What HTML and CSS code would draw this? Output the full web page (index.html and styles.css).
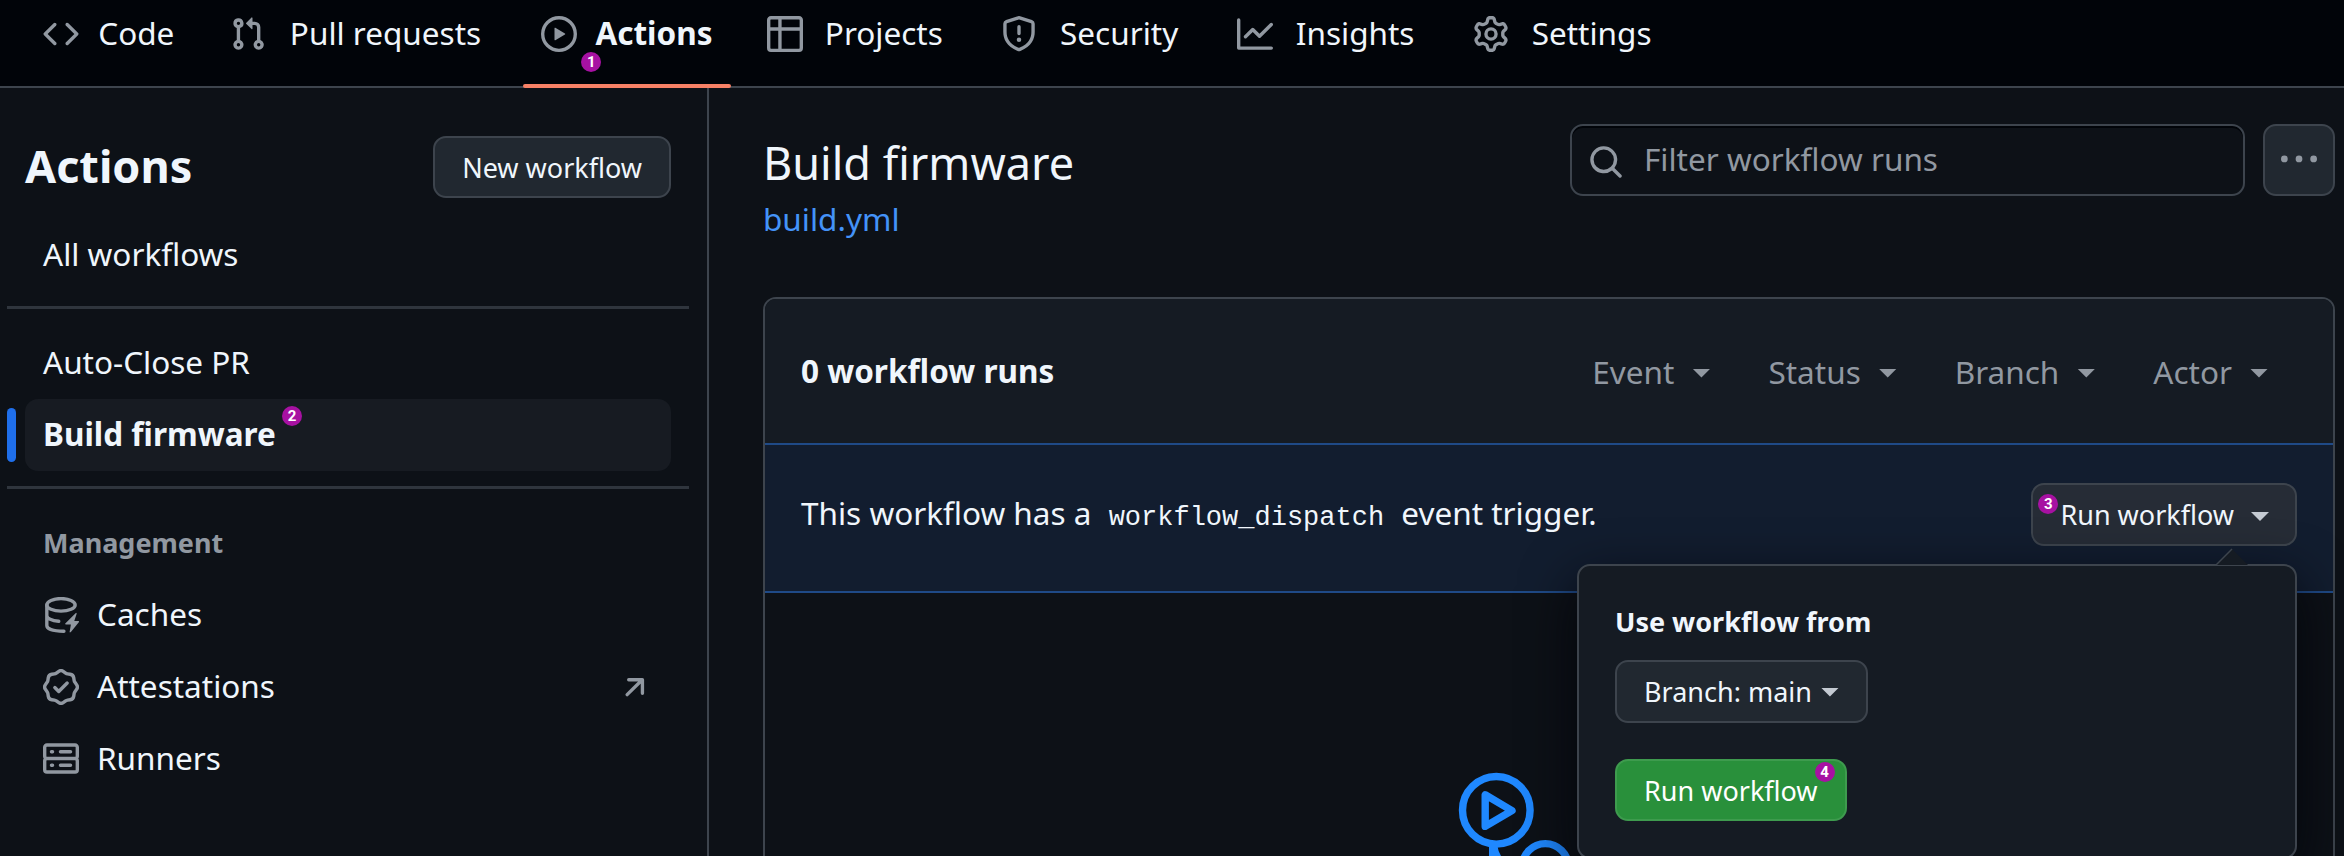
FILE: index.html
```html
<!DOCTYPE html>
<html lang="en">
<head>
<meta charset="utf-8">
<title>Actions</title>
<link rel="stylesheet" href="styles.css">
</head>
<body>
<nav class="nav">
  <a class="nav-item"><svg class="icon" viewBox="0 0 16 16"><path d="m11.28 3.22 4.25 4.25a.75.75 0 0 1 0 1.06l-4.25 4.25a.749.749 0 0 1-1.275-.326.749.749 0 0 1 .215-.734L13.94 8l-3.72-3.72a.749.749 0 0 1 .326-1.275.749.749 0 0 1 .734.215Zm-6.56 0a.751.751 0 0 1 1.042.018.751.751 0 0 1 .018 1.042L2.06 8l3.72 3.72a.749.749 0 0 1-.326 1.275.749.749 0 0 1-.734-.215L.47 8.53a.75.75 0 0 1 0-1.06Z"/></svg><span class="nav-label" data-label="Code">Code</span></a>
  <a class="nav-item"><svg class="icon" viewBox="0 0 16 16"><path d="M1.5 3.25a2.25 2.25 0 1 1 3 2.122v5.256a2.251 2.251 0 1 1-1.5 0V5.372A2.25 2.25 0 0 1 1.5 3.25Zm5.677-.177L9.573.677A.25.25 0 0 1 10 .854V2.5h1A2.5 2.5 0 0 1 13.5 5v5.628a2.251 2.251 0 1 1-1.5 0V5a1 1 0 0 0-1-1h-1v1.646a.25.25 0 0 1-.427.177L7.177 3.427a.25.25 0 0 1 0-.354ZM3.75 2.5a.75.75 0 1 0 0 1.5.75.75 0 0 0 0-1.5Zm0 9.5a.75.75 0 1 0 0 1.5.75.75 0 0 0 0-1.5Zm8.25.75a.75.75 0 1 0 1.5 0 .75.75 0 0 0-1.5 0Z"/></svg><span class="nav-label" data-label="Pull requests">Pull requests</span></a>
  <a class="nav-item nav-item-current"><svg class="icon" viewBox="0 0 16 16"><path d="M8 0a8 8 0 1 1 0 16A8 8 0 0 1 8 0ZM1.5 8a6.5 6.5 0 1 0 13 0 6.5 6.5 0 0 0-13 0Zm4.879-2.773 4.264 2.559a.25.25 0 0 1 0 .428l-4.264 2.559A.25.25 0 0 1 6 10.559V5.442a.25.25 0 0 1 .379-.215Z"/></svg><span class="nav-label" data-label="Actions">Actions</span><span class="step step-1">1</span></a>
  <a class="nav-item"><svg class="icon" viewBox="0 0 16 16"><path d="M0 1.75C0 .784.784 0 1.75 0h12.5C15.216 0 16 .784 16 1.75v12.5A1.75 1.75 0 0 1 14.25 16H1.75A1.75 1.75 0 0 1 0 14.25ZM6.5 6.5v8h7.75a.25.25 0 0 0 .25-.25V6.5Zm8-1.5V1.75a.25.25 0 0 0-.25-.25H6.5V5Zm-13 1.5v7.75c0 .138.112.25.25.25H5v-8ZM5 5V1.5H1.75a.25.25 0 0 0-.25.25V5Z"/></svg><span class="nav-label" data-label="Projects">Projects</span></a>
  <a class="nav-item"><svg class="icon" viewBox="0 0 16 16"><path d="M7.467.133a1.748 1.748 0 0 1 1.066 0l5.25 1.68A1.75 1.75 0 0 1 15 3.48V7c0 1.566-.32 3.182-1.303 4.682-.983 1.498-2.585 2.813-5.032 3.855a1.697 1.697 0 0 1-1.33 0c-2.447-1.042-4.049-2.357-5.032-3.855C1.32 10.182 1 8.566 1 7V3.48a1.75 1.75 0 0 1 1.217-1.667Zm.61 1.429a.25.25 0 0 0-.153 0l-5.25 1.68a.25.25 0 0 0-.174.238V7c0 1.358.275 2.666 1.057 3.86.784 1.194 2.121 2.34 4.366 3.297a.196.196 0 0 0 .154 0c2.245-.956 3.582-2.104 4.366-3.298C13.225 9.666 13.5 8.36 13.5 7V3.48a.251.251 0 0 0-.174-.237l-5.25-1.68ZM8.75 4.75v3a.75.75 0 0 1-1.5 0v-3a.75.75 0 0 1 1.5 0ZM9 10.5a1 1 0 1 1-2 0 1 1 0 0 1 2 0Z"/></svg><span class="nav-label" data-label="Security">Security</span></a>
  <a class="nav-item"><svg class="icon" viewBox="0 0 16 16"><path d="M1.5 1.75V13.5h13.75a.75.75 0 0 1 0 1.5H.75a.75.75 0 0 1-.75-.75V1.75a.75.75 0 0 1 1.5 0Zm14.28 2.53-5.25 5.25a.75.75 0 0 1-1.06 0L7 7.06 4.28 9.78a.751.751 0 0 1-1.042-.018.751.751 0 0 1-.018-1.042l3.25-3.25a.75.75 0 0 1 1.06 0L10 7.94l4.72-4.72a.751.751 0 0 1 1.042.018.751.751 0 0 1 .018 1.042Z"/></svg><span class="nav-label" data-label="Insights">Insights</span></a>
  <a class="nav-item"><svg class="icon" viewBox="0 0 16 16"><path d="M8 0a8.2 8.2 0 0 1 .701.031C9.444.095 9.99.645 10.16 1.29l.288 1.107c.018.066.079.158.212.224.231.114.454.243.668.386.123.082.233.09.299.071l1.103-.303c.644-.176 1.392.021 1.82.63.27.385.506.792.704 1.218.315.675.111 1.422-.364 1.891l-.814.806c-.049.048-.098.147-.088.294.016.257.016.515 0 .772-.01.147.038.246.088.294l.814.806c.475.469.679 1.216.364 1.891a7.977 7.977 0 0 1-.704 1.217c-.428.61-1.176.807-1.82.63l-1.102-.302c-.067-.019-.177-.011-.3.071a5.909 5.909 0 0 1-.668.386c-.133.066-.194.158-.211.224l-.29 1.106c-.168.646-.715 1.196-1.458 1.26a8.006 8.006 0 0 1-1.402 0c-.743-.064-1.289-.614-1.458-1.26l-.289-1.106c-.018-.066-.079-.158-.212-.224a5.738 5.738 0 0 1-.668-.386c-.123-.082-.233-.09-.299-.071l-1.103.303c-.644.176-1.392-.021-1.82-.63a8.12 8.12 0 0 1-.704-1.218c-.315-.675-.111-1.422.363-1.891l.815-.806c.05-.048.098-.147.088-.294a6.214 6.214 0 0 1 0-.772c.01-.147-.038-.246-.088-.294l-.815-.806C.635 6.045.431 5.298.746 4.623a7.92 7.92 0 0 1 .704-1.217c.428-.61 1.176-.807 1.82-.63l1.102.302c.067.019.177.011.3-.071.214-.143.437-.272.668-.386.133-.066.194-.158.211-.224l.29-1.106C6.009.645 6.556.095 7.299.03 7.53.01 7.764 0 8 0Zm-.571 1.525c-.036.003-.108.036-.137.146l-.289 1.105c-.147.561-.549.967-.998 1.189-.173.086-.34.183-.5.29-.417.278-.97.423-1.529.27l-1.103-.303c-.109-.03-.175.016-.195.045-.22.312-.412.644-.573.99-.014.031-.021.11.059.19l.815.806c.411.406.562.957.53 1.456a4.709 4.709 0 0 0 0 .582c.032.499-.119 1.05-.53 1.456l-.815.806c-.081.08-.073.159-.059.19.162.346.353.677.573.989.02.03.085.076.195.046l1.102-.303c.56-.153 1.113-.008 1.53.27.161.107.328.204.501.29.447.222.85.629.997 1.189l.289 1.105c.029.109.101.143.137.146a6.6 6.6 0 0 0 1.142 0c.036-.003.108-.036.137-.146l.289-1.105c.147-.561.549-.967.998-1.189.173-.086.34-.183.5-.29.417-.278.97-.423 1.529-.27l1.103.303c.109.029.175-.016.195-.045.22-.313.411-.644.573-.99.014-.031.021-.11-.059-.19l-.815-.806c-.411-.406-.562-.957-.53-1.456a4.709 4.709 0 0 0 0-.582c-.032-.499.119-1.05.53-1.456l.815-.806c.081-.08.073-.159.059-.19a6.464 6.464 0 0 0-.573-.989c-.02-.03-.085-.076-.195-.046l-1.102.303c-.56.153-1.113.008-1.53-.27a4.44 4.44 0 0 0-.501-.29c-.447-.222-.85-.629-.997-1.189l-.289-1.105c-.029-.11-.101-.143-.137-.146a6.6 6.6 0 0 0-1.142 0ZM11 8a3 3 0 1 1-6 0 3 3 0 0 1 6 0ZM9.5 8a1.5 1.5 0 1 0-3.001.001A1.5 1.5 0 0 0 9.5 8Z"/></svg><span class="nav-label" data-label="Settings">Settings</span></a>
</nav>
<div class="layout">
  <aside class="sidebar">
    <header class="side-head"><h2 class="side-title">Actions</h2><button class="btn">New workflow</button></header>
    <div class="side-item"><span class="side-label">All workflows</span></div>
    <hr class="rule">
    <div class="side-item"><span class="side-label">Auto-Close PR</span></div>
    <div class="side-item side-item-current"><span class="side-label">Build firmware</span><span class="step step-2">2</span></div>
    <hr class="rule">
    <h3 class="side-group">Management</h3>
    <div class="side-item"><svg class="icon" viewBox="0 0 16 16"><g fill="none" stroke="currentColor" stroke-width="1.5" stroke-linecap="round"><ellipse cx="8" cy="3.5" rx="6.3" ry="2.8"/><path d="M1.7 3.5v9.2c0 1.3 2.5 2.5 7.6 2.5M1.7 8.2c0 1.3 2.2 2.4 5.3 2.6"/></g><path d="M14.7 7 9.9 11.8q-.2.4.3.4h2.2l-.6 3.5h.5L16 11.1q.2-.4-.3-.4h-1.8l1.1-3.4Z"/></svg><span class="side-label">Caches</span></div>
    <div class="side-item"><svg class="icon" viewBox="0 0 16 16"><path d="m9.585.52.929.68c.153.112.331.186.518.215l1.138.175a2.678 2.678 0 0 1 2.24 2.24l.174 1.139c.029.187.103.365.215.518l.68.928a2.677 2.677 0 0 1 0 3.17l-.68.928a1.174 1.174 0 0 0-.215.518l-.175 1.138a2.678 2.678 0 0 1-2.241 2.241l-1.138.175a1.17 1.17 0 0 0-.518.215l-.928.68a2.677 2.677 0 0 1-3.17 0l-.928-.68a1.174 1.174 0 0 0-.518-.215L3.83 14.41a2.678 2.678 0 0 1-2.24-2.24l-.175-1.138a1.17 1.17 0 0 0-.215-.518l-.68-.928a2.677 2.677 0 0 1 0-3.17l.68-.928c.112-.153.186-.331.215-.518l.175-1.14a2.678 2.678 0 0 1 2.24-2.24l1.139-.175c.187-.029.365-.103.518-.215l.928-.68a2.677 2.677 0 0 1 3.17 0ZM7.303 1.728l-.927.68a2.67 2.67 0 0 1-1.18.489l-1.137.174a1.179 1.179 0 0 0-.987.987l-.174 1.136a2.677 2.677 0 0 1-.489 1.18l-.68.928a1.18 1.18 0 0 0 0 1.394l.68.927c.256.348.424.753.489 1.18l.174 1.137c.078.509.478.909.987.987l1.136.174a2.67 2.67 0 0 1 1.18.489l.928.68c.414.305.979.305 1.394 0l.927-.68a2.67 2.67 0 0 1 1.18-.489l1.137-.174a1.18 1.18 0 0 0 .987-.987l.174-1.136a2.67 2.67 0 0 1 .489-1.18l.68-.928a1.176 1.176 0 0 0 0-1.394l-.68-.927a2.686 2.686 0 0 1-.489-1.18l-.174-1.137a1.179 1.179 0 0 0-.987-.987l-1.136-.174a2.677 2.677 0 0 1-1.18-.489l-.928-.68a1.176 1.176 0 0 0-1.394 0ZM11.28 6.78l-3.75 3.75a.75.75 0 0 1-1.06 0L4.72 8.78a.751.751 0 0 1 .018-1.042.751.751 0 0 1 1.042-.018L7 8.94l3.22-3.22a.751.751 0 0 1 1.042.018.751.751 0 0 1 .018 1.042Z"/></svg><span class="side-label">Attestations</span><svg class="icon icon-end" viewBox="0 0 16 16"><path fill="none" stroke="currentColor" stroke-width="1.5" stroke-linecap="round" stroke-linejoin="round" d="M5.2 4.75h6.1v6M11 5l-6.5 6.4"/></svg></div>
    <div class="side-item"><svg class="icon" viewBox="0 0 16 16"><path d="M1.75 1h12.5c.966 0 1.75.784 1.75 1.75v4c0 .372-.116.717-.314 1 .198.283.314.628.314 1v4a1.75 1.75 0 0 1-1.75 1.75H1.75A1.75 1.75 0 0 1 0 12.75v-4c0-.358.109-.707.314-1a1.739 1.739 0 0 1-.314-1v-4C0 1.784.784 1 1.75 1ZM1.5 2.75v4c0 .138.112.25.25.25h12.5a.25.25 0 0 0 .25-.25v-4a.25.25 0 0 0-.25-.25H1.75a.25.25 0 0 0-.25.25Zm.25 5.75a.25.25 0 0 0-.25.25v4c0 .138.112.25.25.25h12.5a.25.25 0 0 0 .25-.25v-4a.25.25 0 0 0-.25-.25ZM7 4.75A.75.75 0 0 1 7.75 4h4.5a.75.75 0 0 1 0 1.5h-4.5A.75.75 0 0 1 7 4.75ZM7.75 10h4.5a.75.75 0 0 1 0 1.5h-4.5a.75.75 0 0 1 0-1.5ZM3 4.75A.75.75 0 0 1 3.75 4h.5a.75.75 0 0 1 0 1.5h-.5A.75.75 0 0 1 3 4.75ZM3.75 10h.5a.75.75 0 0 1 0 1.5h-.5a.75.75 0 0 1 0-1.5Z"/></svg><span class="side-label">Runners</span></div>
  </aside>
  <main class="main">
    <header class="page-head">
      <div class="page-titles"><h1 class="page-title">Build firmware</h1><a class="file-link">build.yml</a></div>
      <div class="search"><svg class="icon search-icon" viewBox="0 0 16 16"><path d="M10.68 11.74a6 6 0 0 1-7.922-8.982 6 6 0 0 1 8.982 7.922l3.04 3.04a.749.749 0 0 1-.326 1.275.749.749 0 0 1-.734-.215ZM11.5 7a4.499 4.499 0 1 0-8.997 0A4.499 4.499 0 0 0 11.5 7Z"/></svg><span class="search-hint">Filter workflow runs</span></div>
      <button class="more"><svg class="icon" viewBox="0 0 16 16"><path d="M8 9a1.5 1.5 0 1 0 0-3 1.5 1.5 0 0 0 0 3ZM1.5 9a1.5 1.5 0 1 0 0-3 1.5 1.5 0 0 0 0 3Zm13 0a1.5 1.5 0 1 0 0-3 1.5 1.5 0 0 0 0 3Z"/></svg></button>
    </header>
    <section class="runs">
      <div class="runs-head"><strong class="runs-count">0 workflow runs</strong>
        <div class="filters"><span class="filter">Event<i class="caret"></i></span><span class="filter">Status<i class="caret"></i></span><span class="filter">Branch<i class="caret"></i></span><span class="filter">Actor<i class="caret"></i></span></div>
      </div>
      <div class="dispatch">
        <p class="dispatch-text">This workflow has a <code class="code">workflow_dispatch</code> event trigger.</p>
        <div class="dispatch-menu">
          <button class="btn btn-open">Run workflow<i class="caret"></i><span class="step step-3">3</span></button>
          <div class="popover">
            <svg class="pointer" viewBox="0 0 32 17"><path fill="#151b23" d="M0 17 16 1l16 16Z"/><path fill="none" stroke="#3d444d" stroke-width="1.5" d="M0 17 16 1"/></svg>
            <strong class="popover-title">Use workflow from</strong>
            <button class="btn btn-branch">Branch: main<i class="caret"></i></button>
            <button class="btn btn-primary">Run workflow<span class="step step-4">4</span></button>
          </div>
        </div>
      </div>
      <div class="blank">
        <svg class="blank-art" viewBox="0 0 120 84" fill="none" stroke="#1f88ff" stroke-width="7.4"><circle cx="38.3" cy="38.3" r="33.8"/><path stroke-linejoin="round" d="M27.2 22.8v31.6l26.8-15.8Z"/><path fill="#1f88ff" stroke="none" d="M31 72h8q1 7 4 12H31Z"/><circle cx="87.3" cy="94.6" r="23"/></svg>
      </div>
    </section>
  </main>
</div>
</body>
</html>
```
FILE: styles.css
```css
* { box-sizing: border-box; }
body { margin: 0; height: 856px; overflow: hidden; display: flex; flex-direction: column; background: #0d1117; color: #f0f6fc; font: 31.5px/47px "Noto Sans", sans-serif; }
h1, h2, h3, p { margin: 0; }
.icon { width: 36px; height: 36px; flex: none; fill: currentColor; color: #9198a1; display: block; }
.nav { flex: none; height: 88px; padding: 0 25px; display: flex; gap: 18px; background: #010409; border-bottom: 2px solid #3d444d; }
.nav-item { position: relative; display: flex; align-items: center; gap: 18px; height: 68px; padding: 0 18px; }
.nav-label { text-align: center; padding-bottom: 3px; }
.nav-label::before { content: attr(data-label); display: block; height: 0; visibility: hidden; font-weight: 700; }
.nav-item-current { font-weight: 700; }
.nav-item-current::after { content: ""; position: absolute; left: 0; right: 0; top: 84px; height: 4px; border-radius: 2px; background: #f78166; }
.step { position: absolute; width: 20px; height: 20px; border-radius: 50%; background: #a711a2; color: #fff; font: 700 15px/20px Roboto, sans-serif; text-align: center; }
.step-1 { left: 58px; top: 52px; }
.step-2 { left: 257px; top: 7px; }
.step-3 { left: 5px; top: 9px; }
.step-4 { right: 10px; top: 1px; }
.layout { flex: 1; min-height: 0; display: flex; }
.sidebar { flex: none; width: 709px; padding: 45px 36px 0 25px; border-right: 2px solid #3d444d; }
.side-head { display: flex; justify-content: space-between; align-items: center; height: 68px; margin-bottom: 18px; }
.side-title { font-size: 45px; line-height: 68px; font-weight: 700; padding-bottom: 2px; }
.side-item { position: relative; display: flex; align-items: center; gap: 18px; height: 72px; padding: 0 18px; border-radius: 13px; }
.side-label { padding-bottom: 3px; }
.side-item-current { background: #171b22; font-weight: 700; }
.side-item-current::before { content: ""; position: absolute; left: -18px; top: 9px; width: 9px; height: 54px; border-radius: 6px; background: #1f6feb; }
.icon-end { margin-left: auto; }
.rule { height: 3px; margin: 15px -18px 18px; border: 0; background: #2f353d; }
.side-group { padding: 0 18px; height: 72px; font-size: 27px; line-height: 71px; font-weight: 700; color: #9198a1; }
.btn { position: relative; display: flex; align-items: center; height: 62px; padding: 1px 27px 0; border: 2px solid #3d444d; border-radius: 13px; background: #212830; color: #f0f6fc; font: 27px/40px "Noto Sans", sans-serif; white-space: nowrap; }
.main { flex: 1; min-width: 0; padding: 36px 9px 0 54px; display: flex; flex-direction: column; }
.page-head { display: flex; height: 173px; align-items: flex-start; }
.page-titles { flex: 1; padding-top: 5px; }
.page-title { font-size: 45px; font-weight: 400; line-height: 67px; }
.file-link { display: block; color: #4493f8; line-height: 46px; }
.search { display: flex; align-items: center; gap: 20px; width: 675px; height: 72px; margin-right: 18px; padding: 0 17px 0 16px; border: 2px solid #3d444d; border-radius: 13px; box-shadow: inset 0 2px 0 #010409; color: #9198a1; }
.search-icon { margin-top: 4px; }
.search-hint { padding-bottom: 3px; }
.more { display: flex; align-items: center; justify-content: center; width: 72px; height: 72px; padding: 0; border: 2px solid #3d444d; border-radius: 13px; background: #212830; }
.runs { flex: 1; border: 2px solid #3d444d; border-bottom: 0; border-radius: 13px 13px 0 0; }
.runs-head { display: flex; align-items: center; justify-content: space-between; height: 144px; padding: 0 65px 0 36px; background: #151b23; border-radius: 11px 11px 0 0; }
.runs-count { font-weight: 700; padding-bottom: 2px; }
.filters { display: flex; gap: 58px; color: #9198a1; }
.filter { display: flex; align-items: center; gap: 18px; }
.filter .caret { margin-top: 4px; }
.caret { flex: none; width: 18px; height: 9px; background: currentColor; clip-path: polygon(0 0, 100% 0, 50% 100%); }
.dispatch { display: flex; align-items: flex-start; justify-content: space-between; height: 150px; padding: 38px 36px 0; background: #121d2f; border-top: 2px solid #1f4a87; border-bottom: 2px solid #1f4a87; }
.dispatch-text { padding-top: 6px; }
.code { padding: 0 9px; font: 27px/40px "Liberation Mono", monospace; }
.dispatch-menu { position: relative; }
.btn-open { gap: 17px; height: 63px; padding-right: 26px; background: #262c36; }
.btn .caret { color: #c4cad2; }
.btn-open .caret { margin-top: 3px; }
.popover { position: absolute; right: 0; top: 81px; width: 720px; height: 295px; padding: 36px 36px 0; border: 2px solid #3d444d; border-radius: 13px; background: #151b23; box-shadow: 0 18px 54px rgba(1, 4, 9, .85); display: flex; flex-direction: column; align-items: flex-start; }
.pointer { position: absolute; right: 47px; top: -18px; width: 32px; height: 17px; }
.popover-title { font-size: 27px; line-height: 40px; font-weight: 700; margin-bottom: 18px; }
.btn-branch { gap: 9px; height: 63px; margin-bottom: 36px; }
.btn-primary { background: #29903b; border-color: #3e9b4e; color: #fff; }
.blank { height: 262px; padding: 179px 0 0 693px; }
.blank-art { display: block; width: 120px; height: 84px; }
```
